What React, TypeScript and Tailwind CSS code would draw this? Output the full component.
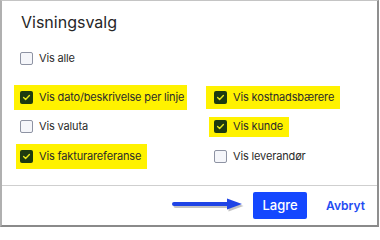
import React from "react";

type Item = {
  label: string;
  checked: boolean;
  hl?: string;
};

function Box({ checked }: { checked: boolean }) {
  if (!checked) {
    return (
      <span className="block h-[13px] w-[13px] shrink-0 rounded-[2px] border border-[#8e93a3] bg-[#f5f6fa]" />
    );
  }
  return (
    <span className="flex h-[13px] w-[13px] shrink-0 items-center justify-center rounded-[2px] bg-[#1d3a10]">
      <svg width="9" height="9" viewBox="0 0 9 9" fill="none">
        <path
          d="M1.6 4.6 L3.6 6.5 L7.4 2.6"
          stroke="#e6e61a"
          strokeWidth="1.4"
          strokeLinecap="round"
          strokeLinejoin="round"
        />
      </svg>
    </span>
  );
}

function Option({ label, checked, hl }: Item) {
  return (
    <div className={`inline-flex items-center gap-[6px] ${hl ?? ""}`}>
      <Box checked={checked} />
      <span className="whitespace-nowrap text-[11px] tracking-[-0.15px] text-[#2b2b2b]">{label}</span>
    </div>
  );
}

const rows: { h: string; left: Item; right: Item }[] = [
  {
    h: "h-[30px]",
    left: {
      label: "Vis dato/beskrivelse per linje",
      checked: true,
      hl: "-ml-[6px] h-[25px] bg-[#fff200] pl-[6px] pr-[3px]",
    },
    right: {
      label: "Vis kostnadsbærere",
      checked: true,
      hl: "-ml-[8px] h-[23px] bg-[#fff200] pl-[8px] pr-[6px]",
    },
  },
  {
    h: "h-[29px]",
    left: { label: "Vis valuta", checked: false },
    right: {
      label: "Vis kunde",
      checked: true,
      hl: "-ml-[5px] h-[20px] bg-[#fff200] pl-[5px] pr-[6px]",
    },
  },
  {
    h: "h-[30px]",
    left: {
      label: "Vis fakturareferanse",
      checked: true,
      hl: "-ml-[4px] h-[25px] bg-[#fff200] pl-[4px] pr-[6px]",
    },
    right: { label: "Vis leverandør", checked: false },
  },
];

export default function App() {
  return (
    <div className="flex h-[227px] w-[379px] flex-col border-b-2 border-l-2 border-r-2 border-t border-b-[#8a8a8a] border-l-[#b0b0b0] border-r-[#8f8f8f] border-t-[#c4c4c4] bg-white font-['Inter',sans-serif]">
      <div className="pl-[19px] pt-[9px] text-[16px] leading-[24px] text-[#262626]">
        Visningsvalg
      </div>

      <div className="mt-[14px] flex h-[20px] items-center pl-[18px]">
        <Option label="Vis alle" checked={false} />
      </div>

      <div className="mt-[14px] pl-[18px]">
        {rows.map((r) => (
          <div key={r.left.label} className={`grid grid-cols-[194px_1fr] items-center ${r.h}`}>
            <div className="flex items-center">
              <Option {...r.left} />
            </div>
            <div className="flex items-center">
              <Option {...r.right} />
            </div>
          </div>
        ))}
      </div>

      <div className="mt-[14px] border-t border-[#cfcfcf]" />

      <div className="mt-[6px] flex items-center justify-end pr-[12px]">
        <svg width="76" height="22" viewBox="0 0 76 22" className="mr-[7px]">
          <g opacity="0.35" transform="translate(1.5 2)">
            <line x1="4" y1="9" x2="60" y2="9" stroke="#555" strokeWidth="4" strokeLinecap="round" />
            <polygon points="57,3.5 72,9 57,14.5" fill="#555" />
          </g>
          <line x1="4" y1="9" x2="60" y2="9" stroke="#1f44e6" strokeWidth="4" strokeLinecap="round" />
          <polygon points="57,3.5 72,9 57,14.5" fill="#1f44e6" />
        </svg>
        <button className="h-[27px] w-[54px] rounded-[2px] bg-[#1447ff] text-[13px] font-medium text-white">
          Lagre
        </button>
        <button className="ml-[19px] text-[12px] font-semibold text-[#1f4cf2]">Avbryt</button>
      </div>
    </div>
  );
}
